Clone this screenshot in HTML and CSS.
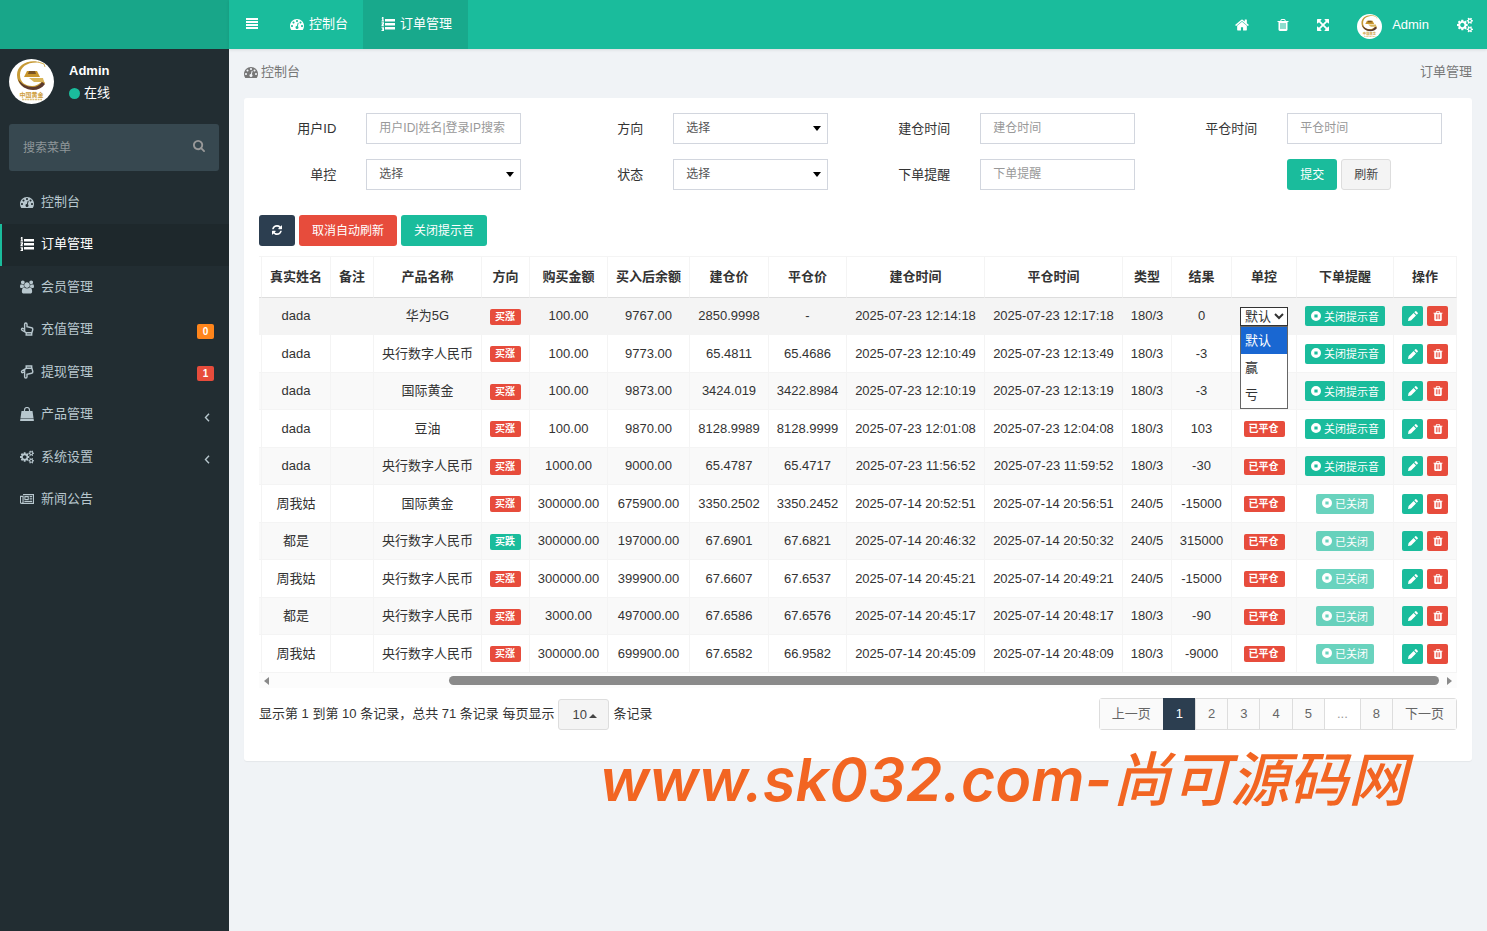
FILE: index.html
```html
<!DOCTYPE html>
<html lang="zh-CN">
<head>
    <meta charset="UTF-8">
    <meta name="viewport" content="width=device-width, initial-scale=1.0">
    <title>订单管理</title>
    <link rel="stylesheet" href="styles.css">
</head>
<body>
    <svg class="sprite" aria-hidden="true">
        <symbol id="i-bars" viewBox="0 0 12 12"><path d="M0 1h12v2H0zM0 4h12v2H0zM0 7h12v2H0zM0 10h12v2H0z"/></symbol>
        <symbol id="i-dash" viewBox="0 0 1792 1792"><path d="M384 1152q0-53-37.500-90.500t-90.500-37.500-90.500 37.500-37.500 90.500 37.500 90.500 90.500 37.500 90.500-37.500 37.500-90.500zm192-448q0-53-37.500-90.500t-90.500-37.500-90.500 37.500-37.500 90.500 37.500 90.500 90.500 37.500 90.500-37.500 37.500-90.500zm428 481l101-382q6-26-7.500-48.500t-38.500-29.500-48 6.500-30 39.500l-101 382q-60 5-107 43.500t-63 98.500q-20 77 20 146t117 89 146-20 89-117q16-60-6-117t-72-91zm660-33q0-53-37.500-90.500t-90.500-37.500-90.500 37.500-37.500 90.500 37.500 90.500 90.500 37.500 90.500-37.500 37.500-90.500zm-640-640q0-53-37.500-90.500t-90.500-37.500-90.500 37.500-37.500 90.500 37.500 90.500 90.500 37.500 90.500-37.500 37.500-90.500zm448 192q0-53-37.500-90.500t-90.500-37.500-90.500 37.500-37.500 90.500 37.500 90.500 90.500 37.500 90.500-37.500 37.500-90.500zm320 448q0 261-141 483-19 29-54 29h-1402q-35 0-54-29-141-221-141-483 0-182 71-348t191-286 286-191 348-71 348 71 286 191 191 286 71 348z"/></symbol>
        <symbol id="i-list" viewBox="0 0 14 14"><path d="M4 2h10v2.400H4zM4 6h10v2.400H4zM4 10h10v2.400H4zM1.200 0h1.300v3.500H3v1H.5v-1h.7V1.500H.5zM.5 5.200h2.500v2L1.800 8.300H3v1H.5v-1.500l1.300-1.400H.5zM.5 10.200H3V14H.5v-1h1.200v-.6H1v-.8h.7v-.4H.5z"/></symbol>
        <symbol id="i-home" viewBox="64 128 1664 1536"><path d="M1472 992v480q0 26-19 45t-45 19h-384v-384h-256v384h-384q-26 0-45-19t-19-45v-480q0-1 .5-3t.5-3l575-474 575 474q1 2 1 6zm223-69l-62 74q-8 9-21 11h-3q-13 0-21-7l-692-577-692 577q-12 8-24 7-13-2-21-11l-62-74q-8-10-7-23.500t11-21.500l719-599q32-26 76-26t76 26l244 204v-195q0-14 9-23t23-9h192q14 0 23 9t9 23v408l219 182q10 8 11 21.500t-7 23.500z"/></symbol>
        <symbol id="i-trash" viewBox="128 128 1536 1536"><path d="M704 1376v-704q0-14-9-23t-23-9h-64q-14 0-23 9t-9 23v704q0 14 9 23t23 9h64q14 0 23-9t9-23zm256 0v-704q0-14-9-23t-23-9h-64q-14 0-23 9t-9 23v704q0 14 9 23t23 9h64q14 0 23-9t9-23zm256 0v-704q0-14-9-23t-23-9h-64q-14 0-23 9t-9 23v704q0 14 9 23t23 9h64q14 0 23-9t9-23zm-544-992h448l-48-117q-7-9-17-11h-317q-10 2-17 11zm928 32v64q0 14-9 23t-23 9h-96v948q0 83-47 143.500t-113 60.500h-832q-66 0-113-58.500t-47-141.500v-952h-96q-14 0-23-9t-9-23v-64q0-14 9-23t23-9h309l70-167q15-37 54-63t79-26h320q40 0 79 26t54 63l70 167h309q14 0 23 9t9 23z"/></symbol>
        <symbol id="i-expand" viewBox="128 128 1536 1536"><path d="M1411 541l-355 355 355 355 144-144q29-31 70-14 39 17 39 59v448q0 26-19 45t-45 19h-448q-42 0-59-40-17-39 14-69l144-144-355-355-355 355 144 144q31 30 14 69-17 40-59 40h-448q-26 0-45-19t-19-45v-448q0-42 40-59 39-17 69 14l144 144 355-355-355-355-144 144q-19 19-45 19-12 0-24-5-40-17-40-59v-448q0-26 19-45t45-19h448q42 0 59 40 17 39-14 69l-144 144 355 355 355-355-144-144q-31-30-14-69 17-40 59-40h448q26 0 45 19t19 45v448q0 42-39 59-13 5-25 5-26 0-45-19z"/></symbol>
        <symbol id="i-cogs" viewBox="0 0 1920 1792"><path d="M896 896q0-106-75-181t-181-75-181 75-75 181 75 181 181 75 181-75 75-181zm768 512q0-52-38-90t-90-38-90 38-38 90q0 53 37.500 90.500t90.500 37.500 90.500-37.500 37.500-90.500zm0-1024q0-52-38-90t-90-38-90 38-38 90q0 53 37.500 90.500t90.500 37.500 90.500-37.500 37.500-90.500zm-384 421v185q0 10-7 19.500t-16 10.500l-155 24q-11 35-32 76 34 48 90 115 7 11 7 20 0 12-7 19-23 30-82.500 89.500t-78.500 59.500q-11 0-21-7l-115-90q-37 19-77 31-11 108-23 155-7 24-30 24h-186q-11 0-20-7.500t-10-17.500l-23-153q-34-10-75-31l-118 89q-7 7-20 7-11 0-21-8-144-133-144-160 0-9 7-19 10-14 41-53t47-61q-23-44-35-82l-152-24q-10-1-17-9.500t-7-19.500v-185q0-10 7-19.500t16-10.500l155-24q11-35 32-76-34-48-90-115-7-11-7-20 0-12 7-20 22-30 82-89t79-59q11 0 21 7l115 90q34-18 77-32 11-108 23-154 7-24 30-24h186q11 0 20 7.500t10 17.500l23 153q34 10 75 31l118-89q8-7 20-7 11 0 21 8 144 133 144 160 0 8-7 19-12 16-42 54t-45 60q23 48 34 82l152 23q10 2 17 10.500t7 19.500zm640 533v140q0 16-149 31-12 27-30 52 51 113 51 138 0 4-4 7-122 71-124 71-8 0-46-47t-52-68q-20 2-30 2t-30-2q-14 21-52 68t-46 47q-2 0-124-71-4-3-4-7 0-25 51-138-18-25-30-52-149-15-149-31v-140q0-16 149-31 13-29 30-52-51-113-51-138 0-4 4-7 4-2 35-20t59-34 30-16q8 0 46 46.500t52 67.500q20-2 30-2t30 2q51-71 92-112l6-2q4 0 124 70 4 3 4 7 0 25-51 138 17 23 30 52 149 15 149 31zm0-1024v140q0 16-149 31-12 27-30 52 51 113 51 138 0 4-4 7-122 71-124 71-8 0-46-47t-52-68q-20 2-30 2t-30-2q-14 21-52 68t-46 47q-2 0-124-71-4-3-4-7 0-25 51-138-18-25-30-52-149-15-149-31v-140q0-16 149-31 13-29 30-52-51-113-51-138 0-4 4-7 4-2 35-20t59-34 30-16q8 0 46 46.500t52 67.500q20-2 30-2t30 2q51-71 92-112l6-2q4 0 124 70 4 3 4 7 0 25-51 138 17 23 30 52 149 15 149 31z"/></symbol>
        <symbol id="i-users" viewBox="-64 0 1920 1792"><path d="M529 896q-162 5-265 128h-134q-82 0-138-40.500t-56-118.500q0-353 124-353 6 0 43.500 21t97.500 42.500 119 21.500q67 0 133-23-5 37-5 66 0 139 81 256zm1071 637q0 120-73 189.500t-194 69.500h-874q-121 0-194-69.500t-73-189.500q0-53 3.500-103.500t14-109 26.500-108.500 43-97.500 62-81 85.500-53.500 111.500-20q10 0 43 21.500t73 48 107 48 135 21.500 135-21.500 107-48 73-48 43-21.500q61 0 111.500 20t85.500 53.500 62 81 43 97.500 26.500 108.500 14 109 3.500 103.500zm-1024-1277q0 106-75 181t-181 75-181-75-75-181 75-181 181-75 181 75 75 181zm704 384q0 159-112.500 271.500t-271.500 112.500-271.500-112.500-112.500-271.500 112.500-271.500 271.500-112.500 271.500 112.500 112.500 271.500zm576 225q0 78-56 118.500t-138 40.500h-134q-103-123-265-128 81-117 81-256 0-29-5-66 66 23 133 23 59 0 119-21.500t97.500-42.500 43.500-21q124 0 124 353zm-128-609q0 106-75 181t-181 75-181-75-75-181 75-181 181-75 181 75 75 181z"/></symbol>
        <symbol id="i-hand" viewBox="0 0 14 14"><path d="M4.600 9V2.200a1.200 1.200 0 0 1 2.400 0v2.600l4.600 1c1 .2 1.300.8 1.200 1.700l-.9 3.300H6.200C5.200 9.800 3.200 9.200 2 8.200.8 7.200 2 5.900 3.100 6.500l1.500.8M6.200 11v2h5.500v-2" fill="none" stroke="currentColor" stroke-width="1.400"/></symbol>
        <symbol id="i-hand-down" viewBox="0 0 14 14"><path transform="matrix(1 0 0 -1 0 14)" d="M4.600 9V2.200a1.200 1.200 0 0 1 2.400 0v2.600l4.600 1c1 .2 1.300.8 1.200 1.700l-.9 3.300H6.200C5.200 9.800 3.200 9.200 2 8.200.8 7.200 2 5.900 3.100 6.500l1.500.8M6.200 11v2h5.500v-2" fill="none" stroke="currentColor" stroke-width="1.400"/></symbol>
        <symbol id="i-bag" viewBox="0 0 14 14"><path d="M1.500 4h11l1 7H.5zM.4 11.600h13.200l.3 2.400H.1z"/><path d="M4.500 5V3a2.500 2.500 0 0 1 5 0v2" fill="none" stroke="currentColor" stroke-width="1.200"/></symbol>
        <symbol id="i-news" viewBox="0 0 16 14"><path d="M3.500 2h12v10H2q-1.500 0-1.500-1.500V4h3v6.500Q3.500 12 2 12" fill="none" stroke="currentColor" stroke-width="1.300"/><path d="M5 3.700h5v4.600H5zM6.200 5v2h2.600V5zM11 3.700h3v1h-3zM11 5.700h3v1h-3zM11 7.500h3v1h-3zM5 9.300h9v1H5z" fill-rule="evenodd"/></symbol>
        <symbol id="i-angle" viewBox="0 0 6 9"><path d="M5 .8L1.500 4.500 5 8.200" fill="none" stroke="currentColor" stroke-width="1.400"/></symbol>
        <symbol id="i-search" viewBox="64 128 1664 1664"><path d="M1216 832q0-185-131.500-316.500t-316.500-131.500-316.500 131.500-131.500 316.500 131.500 316.500 316.500 131.500 316.500-131.500 131.500-316.500zm512 832q0 52-38 90t-90 38q-54 0-90-38l-343-342q-179 124-399 124-143 0-273.500-55.500t-225-150-150-225-55.500-273.500 55.500-273.500 150-225 225-150 273.500-55.500 273.500 55.500 225 150 150 225 55.500 273.500q0 220-124 399l343 343q37 37 37 90z"/></symbol>
        <symbol id="i-pencil" viewBox="0 0 10 10"><path d="M0 10l.6-3L5.600 2 8 4.400 3 9.400zM6.300 1.300L7.300.3q.5-.5 1 0l1.400 1.400q.5.500 0 1l-1 1z"/></symbol>
        <symbol id="i-refresh" viewBox="128 128 1536 1536"><path d="M1639 1056q0 5-1 7-64 268-268 434.500t-478 166.500q-146 0-282.500-55t-243.500-157l-129 129q-19 19-45 19t-45-19-19-45v-448q0-26 19-45t45-19h448q26 0 45 19t19 45-19 45l-137 137q71 66 161 102t187 36q134 0 250-65t186-179q11-17 53-117 8-23 30-23h192q13 0 22.500 9.500t9.500 22.500zm25-800v448q0 26-19 45t-45 19h-448q-26 0-45-19t-19-45 19-45l138-138q-148-137-349-137-134 0-250 65t-186 179q-11 17-53 117-8 23-30 23h-199q-13 0-22.500-9.500t-9.500-22.500v-7q65-268 270-434.500t480-166.500q146 0 284 55.500t245 156.500l130-129q19-19 45-19t45 19 19 45z"/></symbol>
        <symbol id="i-stop" viewBox="0 0 10 10"><path fill-rule="evenodd" d="M5 0a5 5 0 1 1 0 10A5 5 0 0 1 5 0zM3.400 3.400v3.200h3.200V3.400z"/></symbol>
        <symbol id="i-caret" viewBox="0 0 8 5"><path d="M0 0h8L4 5z"/></symbol>
        <symbol id="i-caret-up" viewBox="0 0 8 4"><path d="M0 4h8L4 0z"/></symbol>
        <symbol id="i-left" viewBox="0 0 5 8"><path d="M5 0v8L0 4z"/></symbol>
        <symbol id="i-right" viewBox="0 0 5 8"><path d="M0 0v8l5-4z"/></symbol>
        <symbol id="i-logo" viewBox="0 0 45 45">
            <circle cx="22.500" cy="22.500" r="22.500" fill="#fff"/>
            <path d="M33 4C21-1 8 5 8 16c0 9 7 14 15 14 6 0 10-2 13-6l-2-3c-3 4-7 6-11 6-7 0-12-4-12-11C11 7 20 2 33 4z" fill="#c79a35"/>
            <path d="M9 20c2 7 8 11 15 11 5 0 9-2 12-6l-3-2c-3 4-6 5-9 5-6 0-12-3-15-8z" fill="#5b3a2e"/>
            <path d="M18 12h10l3 6H15z" fill="#c9962c"/>
            <path d="M20 12h6l1 3h-8z" fill="#7a5322"/>
            <path d="M20 19h14l1 4H25z" fill="#d9b65b"/>
            <path d="M29 3l6 2 1 3" fill="none" stroke="#d9b65b"/>
            <text x="22.500" y="38" text-anchor="middle" font-size="6" font-weight="700" fill="#cfa040">中国黄金</text>
            <path d="M13 40.500h20" stroke="#dfc07a" stroke-width="1.500" stroke-dasharray="2 .6"/>
        </symbol>
    </svg>

    <div class="app">
        <aside class="sidebar">
            <div class="logo"></div>
            <div class="user-panel">
                <svg class="avatar"><use href="#i-logo"/></svg>
                <div class="user-info">
                    <strong>Admin</strong>
                    <span class="online">在线</span>
                </div>
            </div>
            <form class="menu-search">
                <input type="text" placeholder="搜索菜单" aria-label="搜索菜单">
                <button type="button" aria-label="搜索"><svg class="icon-12"><use href="#i-search"/></svg></button>
            </form>
            <nav class="menu">
                <a href="#"><svg class="icon"><use href="#i-dash"/></svg><span>控制台</span></a>
                <a href="#" class="active"><svg class="icon"><use href="#i-list"/></svg><span>订单管理</span></a>
                <a href="#"><svg class="icon"><use href="#i-users"/></svg><span>会员管理</span></a>
                <a href="#"><svg class="icon"><use href="#i-hand"/></svg><span>充值管理</span><b class="count orange">0</b></a>
                <a href="#"><svg class="icon"><use href="#i-hand-down"/></svg><span>提现管理</span><b class="count red">1</b></a>
                <a href="#"><svg class="icon"><use href="#i-bag"/></svg><span>产品管理</span><svg class="angle"><use href="#i-angle"/></svg></a>
                <a href="#"><svg class="icon"><use href="#i-cogs"/></svg><span>系统设置</span><svg class="angle"><use href="#i-angle"/></svg></a>
                <a href="#"><svg class="icon"><use href="#i-news"/></svg><span>新闻公告</span></a>
            </nav>
        </aside>

        <div class="main">
            <header class="topbar">
                <button class="toggle" aria-label="菜单"><svg class="icon-12"><use href="#i-bars"/></svg></button>
                <a href="#" class="tab"><svg class="icon"><use href="#i-dash"/></svg>控制台</a>
                <a href="#" class="tab active"><svg class="icon"><use href="#i-list"/></svg>订单管理</a>
                <div class="top-right">
                    <a href="#" aria-label="主页"><svg class="icon"><use href="#i-home"/></svg></a>
                    <a href="#" aria-label="清除缓存"><svg class="icon-12"><use href="#i-trash"/></svg></a>
                    <a href="#" aria-label="全屏"><svg class="icon-12"><use href="#i-expand"/></svg></a>
                    <a href="#" class="top-user"><svg class="avatar-sm"><use href="#i-logo"/></svg>Admin</a>
                    <a href="#" aria-label="设置"><svg class="icon-16"><use href="#i-cogs"/></svg></a>
                </div>
            </header>

            <main class="content">
                <div class="breadcrumb">
                    <a href="#"><svg class="icon"><use href="#i-dash"/></svg>控制台</a>
                    <span>订单管理</span>
                </div>

                <section class="panel">
                    <form class="filters">
                        <div class="field">
                            <label for="uid">用户ID</label>
                            <input type="text" id="uid" placeholder="用户ID|姓名|登录IP搜索">
                        </div>
                        <div class="field">
                            <label for="direction">方向</label>
                            <div class="select"><select id="direction"><option>选择</option></select><svg><use href="#i-caret"/></svg></div>
                        </div>
                        <div class="field">
                            <label for="opentime">建仓时间</label>
                            <input type="text" id="opentime" placeholder="建仓时间">
                        </div>
                        <div class="field">
                            <label for="closetime">平仓时间</label>
                            <input type="text" id="closetime" placeholder="平仓时间">
                        </div>
                        <div class="field">
                            <label for="control">单控</label>
                            <div class="select"><select id="control"><option>选择</option></select><svg><use href="#i-caret"/></svg></div>
                        </div>
                        <div class="field">
                            <label for="status">状态</label>
                            <div class="select"><select id="status"><option>选择</option></select><svg><use href="#i-caret"/></svg></div>
                        </div>
                        <div class="field">
                            <label for="remind">下单提醒</label>
                            <input type="text" id="remind" placeholder="下单提醒">
                        </div>
                        <div class="field">
                            <span></span>
                            <div class="buttons">
                                <button type="button" class="btn green">提交</button>
                                <button type="button" class="btn default">刷新</button>
                            </div>
                        </div>
                    </form>

                    <div class="buttons toolbar">
                        <button class="btn dark" aria-label="刷新"><svg class="icon-10"><use href="#i-refresh"/></svg></button>
                        <button class="btn red">取消自动刷新</button>
                        <button class="btn green">关闭提示音</button>
                    </div>

                    <table class="orders">
                        <colgroup>
                            <col class="w-edge"><col class="w-name"><col class="w-note"><col class="w-product"><col class="w-dir">
                            <col class="w-price"><col class="w-balance"><col class="w-open"><col class="w-price"><col class="w-time">
                            <col class="w-time"><col class="w-type"><col class="w-result"><col class="w-control"><col class="w-remind"><col class="w-action">
                        </colgroup>
                        <thead>
                            <tr>
                                <th></th><th>真实姓名</th><th>备注</th><th>产品名称</th><th>方向</th><th>购买金额</th><th>买入后余额</th><th>建仓价</th>
                                <th>平仓价</th><th>建仓时间</th><th>平仓时间</th><th>类型</th><th>结果</th><th>单控</th><th>下单提醒</th><th>操作</th>
                            </tr>
                        </thead>
                        <tbody id="orderRows"></tbody>
                    </table>
                    <div class="scrollbar">
                        <svg><use href="#i-left"/></svg>
                        <div class="track"><div class="thumb"></div></div>
                        <svg><use href="#i-right"/></svg>
                    </div>

                    <div class="table-footer">
                        <div class="summary">
                            <label for="pageSize">显示第 1 到第 10 条记录，总共 71 条记录 每页显示</label>
                            <div class="select page-size"><select id="pageSize"><option>10</option></select><svg><use href="#i-caret-up"/></svg></div>
                            <span>条记录</span>
                        </div>
                        <nav class="pagination">
                            <a href="#">上一页</a><a href="#" class="current">1</a><a href="#">2</a><a href="#">3</a><a href="#">4</a><a href="#">5</a><span>...</span><a href="#">8</a><a href="#">下一页</a>
                        </nav>
                    </div>
                </section>
                <div class="watermark"><span>www.sk032.com-</span>尚可源码网</div>
            </main>
        </div>
    </div>

    <script>
        // name, product, direction, amount, balance, open price, close price, open time, close time, type, result, reminder on
        const orders = [
            ['dada', '华为5G', '买涨', '100.00', '9767.00', '2850.9998', '-', '2025-07-23 12:14:18', '2025-07-23 12:17:18', '180/3', '0', true],
            ['dada', '央行数字人民币', '买涨', '100.00', '9773.00', '65.4811', '65.4686', '2025-07-23 12:10:49', '2025-07-23 12:13:49', '180/3', '-3', true],
            ['dada', '国际黄金', '买涨', '100.00', '9873.00', '3424.019', '3422.8984', '2025-07-23 12:10:19', '2025-07-23 12:13:19', '180/3', '-3', true],
            ['dada', '豆油', '买涨', '100.00', '9870.00', '8128.9989', '8128.9999', '2025-07-23 12:01:08', '2025-07-23 12:04:08', '180/3', '103', true],
            ['dada', '央行数字人民币', '买涨', '1000.00', '9000.00', '65.4787', '65.4717', '2025-07-23 11:56:52', '2025-07-23 11:59:52', '180/3', '-30', true],
            ['周我姑', '国际黄金', '买涨', '300000.00', '675900.00', '3350.2502', '3350.2452', '2025-07-14 20:52:51', '2025-07-14 20:56:51', '240/5', '-15000', false],
            ['都是', '央行数字人民币', '买跌', '300000.00', '197000.00', '67.6901', '67.6821', '2025-07-14 20:46:32', '2025-07-14 20:50:32', '240/5', '315000', false],
            ['周我姑', '央行数字人民币', '买涨', '300000.00', '399900.00', '67.6607', '67.6537', '2025-07-14 20:45:21', '2025-07-14 20:49:21', '240/5', '-15000', false],
            ['都是', '央行数字人民币', '买涨', '3000.00', '497000.00', '67.6586', '67.6576', '2025-07-14 20:45:17', '2025-07-14 20:48:17', '180/3', '-90', false],
            ['周我姑', '央行数字人民币', '买涨', '300000.00', '699900.00', '67.6582', '66.9582', '2025-07-14 20:45:09', '2025-07-14 20:48:09', '180/3', '-9000', false]
        ];

        const controlSelect = `
            <div class="control">
                <select aria-label="单控"><option>默认</option><option>赢</option><option>亏</option></select>
                <ul class="control-list"><li class="selected">默认</li><li>赢</li><li>亏</li></ul>
            </div>`;

        document.getElementById('orderRows').innerHTML = orders.map((o, i) => {
            const [name, product, dir, amount, balance, open, close, openTime, closeTime, type, result, remind] = o;
            const control = i === 0 ? controlSelect : (i < 3 ? '' : '<span class="label red">已平仓</span>');
            return `<tr>
                <td></td><td>${name}</td><td></td><td>${product}</td>
                <td><span class="label ${dir === '买涨' ? 'red' : 'green'}">${dir}</span></td>
                <td>${amount}</td><td>${balance}</td><td>${open}</td><td>${close}</td>
                <td>${openTime}</td><td>${closeTime}</td><td>${type}</td><td>${result}</td>
                <td>${control}</td>
                <td><button class="btn-xs green" ${remind ? '' : 'disabled'}><svg class="icon-10"><use href="#i-stop"/></svg>${remind ? '关闭提示音' : '已关闭'}</button></td>
                <td><div class="actions">
                    <button class="btn-xs green" aria-label="编辑"><svg class="icon-10"><use href="#i-pencil"/></svg></button>
                    <button class="btn-xs red" aria-label="删除"><svg class="icon-10"><use href="#i-trash"/></svg></button>
                </div></td>
            </tr>`;
        }).join('');
    </script>
</body>
</html>
```
FILE: styles.css
```css
* {
    box-sizing: border-box;
}
body {
    margin: 0;
    font-family: "Liberation Sans", "Noto Sans CJK SC", sans-serif;
    font-size: 13px;
    line-height: 20px;
    color: #333;
    background-color: #f0f3f6;
}
a {
    color: inherit;
    text-decoration: none;
}
button, input, select {
    font-family: inherit;
    font-size: 12px;
    margin: 0;
}
svg {
    fill: currentColor;
    flex: none;
}
.sprite {
    display: none;
}
.icon {
    width: 14px;
    height: 14px;
}
.icon-16 {
    width: 16px;
    height: 16px;
}
.icon-12 {
    width: 12px;
    height: 12px;
}
.icon-10 {
    width: 10px;
    height: 10px;
}
.green { background-color: #1abc9c; color: #fff; }
.red { background-color: #e74c3c; color: #fff; }
.dark { background-color: #2c3e50; color: #fff; }
.orange { background-color: #ff851b; color: #fff; }

.app {
    display: flex;
    min-height: 100vh;
}

/* sidebar */
.sidebar {
    flex: 0 0 229px;
    min-width: 0;
    background-color: #222d32;
    color: #fff;
}
.logo {
    height: 49px;
    background-color: #18a689;
}
.user-panel {
    display: flex;
    gap: 15px;
    padding: 10px 9px;
}
.avatar {
    width: 45px;
    height: 45px;
}
.user-info {
    display: flex;
    flex-direction: column;
    padding-top: 1px;
    line-height: 22px;
}
.online {
    display: flex;
    align-items: center;
    gap: 4px;
}
.online::before {
    content: "";
    width: 11px;
    height: 11px;
    border-radius: 50%;
    background-color: #1abc9c;
}
.menu-search {
    display: flex;
    height: 47px;
    margin: 10px 10px 10px 9px;
    border-radius: 3px;
    background-color: #374850;
}
.menu-search input {
    flex: 1;
    min-width: 0;
    padding: 0 14px;
    border: 0;
    background: none;
    color: #fff;
}
.menu-search input::placeholder {
    color: #8e9699;
}
.menu-search button {
    width: 40px;
    padding: 0;
    border: 0;
    background: none;
    color: #999;
}
.menu a {
    display: flex;
    align-items: center;
    gap: 7px;
    height: 43px;
    padding: 0 15px 2px 18px;
    border-left: 2px solid transparent;
    color: #b8c7ce;
}
.menu a:nth-child(even) {
    height: 42px;
}
.menu a.active {
    border-left-color: #1abc9c;
    background-color: #1e282c;
    color: #fff;
}
.menu span {
    flex: 1;
}
.count {
    width: 17px;
    margin-top: 4px;
    border-radius: 2px;
    font-size: 10px;
    line-height: 15px;
    text-align: center;
}
.angle {
    width: 6px;
    height: 9px;
    margin: 6px 4px 0 0;
}

/* top bar */
.main {
    flex: 1;
    min-width: 0;
}
.topbar {
    display: flex;
    height: 49px;
    background-color: #1abc9c;
    color: #fff;
    box-shadow: 0 1px 3px rgba(0, 0, 0, 0.1);
}
.toggle {
    width: 46px;
    padding: 0;
    border: 0;
    background: none;
    color: #fff;
}
.tab {
    display: flex;
    align-items: center;
    gap: 5px;
    padding: 0 15px 2px;
}
.tab.active {
    padding: 0 16px 2px 18px;
    background-color: #18a98c;
}
.top-right {
    display: flex;
    margin-left: auto;
}
.top-right a {
    display: flex;
    align-items: center;
    padding: 0 14px;
}
.top-right .top-user {
    gap: 10px;
}
.top-right .top-user svg {
    margin-top: 4px;
}
.avatar-sm {
    width: 25px;
    height: 25px;
}

/* content */
.content {
    position: relative;
    padding: 0 15px;
}
.breadcrumb {
    display: flex;
    justify-content: space-between;
    padding: 13px 0 16px;
    color: #777;
}
.breadcrumb a {
    display: flex;
    align-items: center;
    gap: 3px;
}
.panel {
    padding: 15px 15px 31px;
    border-radius: 3px;
    background-color: #fff;
    box-shadow: 0 1px 1px rgba(0, 0, 0, 0.05);
}
.filters {
    display: grid;
    grid-template-columns: repeat(4, 1fr);
    row-gap: 15px;
    margin: 0 -15px 25px;
}
.field {
    display: grid;
    grid-template-columns: 1fr 2fr;
    gap: 30px;
    align-items: center;
    padding: 0 30px 0 15px;
}
.field label {
    text-align: right;
    white-space: nowrap;
}
.field input, .select select {
    width: 100%;
    height: 31px;
    padding: 0 12px 1px;
    border: 1px solid #d2d6de;
    border-radius: 0;
    background-color: #fff;
    color: #555;
}
.field input::placeholder {
    color: #999;
}
.select {
    position: relative;
}
.select select {
    appearance: none;
}
.select svg {
    position: absolute;
    right: 7px;
    top: 13px;
    width: 8px;
    height: 5px;
    color: #000;
    pointer-events: none;
}
.buttons {
    display: flex;
    gap: 4px;
}
.toolbar {
    margin-bottom: 10px;
}
.btn {
    height: 31px;
    padding: 0 12px 2px;
    border: 1px solid transparent;
    border-radius: 3px;
}
.btn.default {
    border-color: #ddd;
    background-color: #f4f4f4;
    color: #444;
}
.btn svg {
    vertical-align: middle;
}

/* order table */
.orders {
    width: 100%;
    table-layout: fixed;
    border-collapse: separate;
    border-spacing: 0;
    text-align: center;
    white-space: nowrap;
}
.w-edge { width: 3px; }
.w-name { width: 69px; }
.w-note { width: 43px; }
.w-product { width: 108px; }
.w-dir { width: 48px; }
.w-price { width: 78px; }
.w-balance { width: 82px; }
.w-open { width: 79px; }
.w-time { width: 138px; }
.w-type { width: 49px; }
.w-result { width: 60px; }
.w-control { width: 65px; }
.w-remind { width: 97px; }
.w-action { width: 63px; }
.orders th, .orders td {
    padding: 0;
    border-right: 1px solid #f4f4f4;
    border-bottom: 1px solid #f4f4f4;
}
.orders th {
    height: 42px;
    border-top: 1px solid #f4f4f4;
    border-bottom-color: #ddd;
}
.orders td {
    height: 37px;
}
.orders tr:nth-child(even) td {
    height: 38px;
}
.orders tbody tr:nth-child(odd) {
    background-color: #f9f9f9;
}
.orders tbody tr:first-child {
    background-color: #f4f4f4;
}
.label {
    display: inline-block;
    padding: 0 6px 0 5px;
    border-radius: 2px;
    font-size: 10px;
    font-weight: bold;
    line-height: 16px;
    vertical-align: middle;
}
.btn-xs {
    display: inline-flex;
    align-items: center;
    gap: 3px;
    height: 20px;
    padding: 0 6px 1px;
    border: 0;
    border-radius: 2px;
    font-size: 11px;
    vertical-align: middle;
}
.btn-xs:disabled {
    opacity: 0.65;
}
.actions {
    display: flex;
    justify-content: center;
    gap: 4px;
}
.actions .btn-xs {
    padding: 0 5px 0 6px;
}
.control {
    position: relative;
    width: 48px;
    margin: 0 auto;
}
.control select {
    display: block;
    width: 48px;
    height: 19px;
    padding: 0;
    border: 1px solid #333;
    border-radius: 0;
    background-color: #fff;
    color: #333;
    font-size: 13px;
}
.control-list {
    position: absolute;
    top: 100%;
    left: 0;
    width: 48px;
    margin: 0;
    padding: 0;
    border: 1px solid #666;
    background-color: #fff;
    line-height: 27px;
    list-style: none;
    text-align: left;
}
.control-list li {
    padding-left: 4px;
}
.control-list .selected {
    background-color: #1967d2;
    color: #fff;
}
.scrollbar {
    display: flex;
    align-items: center;
    gap: 5px;
    height: 15px;
    padding: 0 5px;
    background-color: #fcfcfc;
    color: #8a8a8a;
}
.scrollbar svg {
    width: 5px;
    height: 8px;
}
.track {
    flex: 1;
    display: flex;
    justify-content: flex-end;
    padding-right: 3px;
}
.thumb {
    width: 85%;
    height: 9px;
    border-radius: 5px;
    background-color: #8a8a8a;
}

/* footer of the table */
.table-footer {
    display: flex;
    justify-content: space-between;
    margin-top: 10px;
}
.summary {
    display: flex;
    align-items: center;
    gap: 4px;
}
.page-size select {
    width: 51px;
    padding: 0 13px;
    border-color: #ddd;
    border-radius: 3px;
    background-color: #f4f4f4;
    color: #444;
    font-size: 13px;
}
.page-size svg {
    right: 12px;
    top: 15px;
    width: 8px;
    height: 4px;
    color: #444;
}
.pagination {
    display: flex;
    border: 1px solid #ddd;
    border-radius: 3px;
    color: #666;
    line-height: 30px;
}
.pagination a, .pagination span {
    padding: 0 12px;
    border-left: 1px solid #ddd;
    background-color: #fafafa;
}
.pagination a:first-child {
    border-left: 0;
}
.pagination span {
    background-color: #fff;
    color: #999;
}
.pagination .current {
    margin: -1px 0;
    border-color: #2c3e50;
    background-color: #2c3e50;
    color: #fff;
    line-height: 32px;
}
.watermark {
    position: absolute;
    top: 682px;
    left: 371px;
    color: #f26522;
    font-family: "Noto Sans CJK SC", sans-serif;
    font-size: 59px;
    font-style: italic;
    font-weight: 500;
    line-height: 90px;
    white-space: nowrap;
}
.watermark span {
    font-family: Inter, sans-serif;
    font-size: 59px;
    font-weight: 600;
}
```
